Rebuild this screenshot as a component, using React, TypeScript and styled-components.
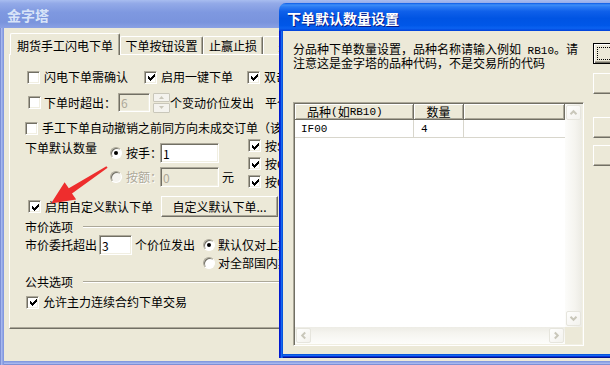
import React from "react";
import styled, { createGlobalStyle } from "styled-components";

const FONT = `"Noto Sans CJK SC", "Noto Sans", "DejaVu Sans", sans-serif`;
const MONO = `"Liberation Mono", "DejaVu Sans Mono", monospace`;

const GlobalStyle = createGlobalStyle`
  * { box-sizing: border-box; }
  html, body { margin: 0; padding: 0; }
  body { background: #ECE9D8; font-family: ${FONT}; font-size: 12px; color: #000; overflow: hidden; }
`;

const Desktop = styled.div`
  position: relative;
  width: 610px;
  height: 365px;
  overflow: hidden;
  background: #8A9FE2;
`;

const Window = styled.section<{ $x: number; $y: number; $w: number; $h: number; $z: number }>`
  position: absolute;
  left: ${(p) => p.$x}px;
  top: ${(p) => p.$y}px;
  width: ${(p) => p.$w}px;
  height: ${(p) => p.$h}px;
  z-index: ${(p) => p.$z};
  display: flex;
  flex-direction: column;
`;

const TitleBar = styled.header<{ $active?: boolean }>`
  flex: none;
  height: 28px;
  display: flex;
  align-items: center;
  padding-left: ${(p) => (p.$active ? 8 : 7)}px;
  padding-top: ${(p) => (p.$active ? 2 : 1)}px;
  font-family: ${FONT};
  font-weight: bold;
  font-size: 14px;
  white-space: nowrap;
  color: ${(p) => (p.$active ? "#fff" : "#D8E4F8")};
  text-shadow: ${(p) => (p.$active ? "1px 1px #0A1883" : "none")};
  border-radius: ${(p) => (p.$active ? "7px 7px 0 0" : "0")};
  background: ${(p) =>
    p.$active
      ? "linear-gradient(180deg, #0A5AE6 0%, #3D8EF7 7%, #2A7BF3 14%, #0F60EA 30%, #0054E3 55%, #0057E8 80%, #0B62F0 90%, #0040D8 100%)"
      : "linear-gradient(180deg, #A8BDF0 0%, #93AAE8 12%, #7E98E0 45%, #7A94DD 80%, #8AA1E4 100%)"};
`;

const BackFrame = styled.div`
  flex: 1;
  background: #ECE9D8;
  padding: 5px 0 4px 9px;
  box-shadow: inset 1px 0 #7D90D6, inset 2px 0 #A7B8EE, inset 3px 0 #93A7E6, inset 4px 0 #8399E0,
    inset 0 -1px #7D90D6, inset 0 -2px #A7B8EE, inset 0 -3px #93A7E6, inset 0 -4px #8399E0;
  display: flex;
  flex-direction: column;
`;

const FrontFrame = styled.div`
  flex: 1;
  background: #ECE9D8;
  padding: 0 0 4px 4px;
  box-shadow: inset 1px 0 #0019CF, inset 2px 0 #0831D9, inset 3px 0 #166AEE, inset 4px 0 #0855DD,
    inset 0 -1px #00138C, inset 0 -2px #0831D9, inset 0 -3px #166AEE, inset 0 -4px #0855DD;
  display: flex;
`;

/* ---------- tabs ---------- */
const TabStrip = styled.div`
  flex: none;
  height: 21px;
  display: flex;
  align-items: flex-end;
  padding-left: 1px;
  position: relative;
  z-index: 2;
`;

const Tab = styled.div<{ $active?: boolean; $w: number }>`
  flex: none;
  width: ${(p) => p.$w}px;
  height: ${(p) => (p.$active ? 22 : 18)}px;
  margin-bottom: ${(p) => (p.$active ? -1 : 0)}px;
  padding-top: ${(p) => (p.$active ? 2 : 1)}px;
  display: flex;
  align-items: center;
  justify-content: center;
  background: #ECE9D8;
  border-top: 1px solid #fff;
  border-left: 1px solid #fff;
  border-right: 1px solid #716F64;
  border-radius: 2px 2px 0 0;
  box-shadow: inset -1px 0 #ACA899;
  white-space: nowrap;
  overflow: hidden;
  line-height: 12px;
`;

const TabPanel = styled.div`
  flex: none;
  height: 275px;
  width: 640px;
  position: relative;
  z-index: 1;
  border-top: 1px solid #fff;
  border-left: 1px solid #fff;
  border-bottom: 1px solid #716F64;
  box-shadow: inset 0 -1px #ACA899;
  display: flex;
  flex-direction: column;
`;

/* ---------- form parts ---------- */
const Row = styled.div<{ $mt: number; $h: number; $pl: number; $top?: boolean }>`
  flex: none;
  display: flex;
  align-items: ${(p) => (p.$top ? "flex-start" : "center")};
  height: ${(p) => p.$h}px;
  margin-top: ${(p) => p.$mt}px;
  padding-left: ${(p) => p.$pl}px;
  white-space: nowrap;
`;

const Text = styled.span<{ $w?: number; $ml?: number; $mt?: number; $disabled?: boolean }>`
  flex: none;
  ${(p) => (p.$w ? `width: ${p.$w}px;` : "")}
  margin-left: ${(p) => p.$ml ?? 0}px;
  margin-top: ${(p) => p.$mt ?? 0}px;
  font-size: 12px;
  line-height: 12px;
  white-space: nowrap;
  color: ${(p) => (p.$disabled ? "#ACA899" : "#000")};
  text-shadow: ${(p) => (p.$disabled ? "1px 1px #fff" : "none")};
`;

const Latin = styled.span`
  font-family: ${MONO};
  font-size: 11px;
`;

const CheckItem = styled.label<{ $w?: number }>`
  flex: none;
  display: flex;
  align-items: center;
  gap: 4px;
  ${(p) => (p.$w ? `width: ${p.$w}px;` : "")}
`;

const Box = styled.span`
  flex: none;
  width: 13px;
  height: 13px;
  background: #fff;
  border: 1px solid;
  border-color: #ACA899 #fff #fff #ACA899;
  box-shadow: inset 1px 1px #716F64, inset -1px -1px #F1EFE2;
  display: flex;
  align-items: center;
  justify-content: center;
  padding: 1px 0 0 1px;
`;

function Check({ checked }: { checked?: boolean }) {
  return (
    <Box>
      {checked && (
        <svg width="7" height="7" viewBox="0 0 7 7" shapeRendering="crispEdges">
          <path d="M0 2h1v1h1v1h1V3h1V2h1V1h1V0h1v3h-1v1h-1v1h-1v1h-1v1h-1V6h-1V5H0z" fill="#000" />
        </svg>
      )}
    </Box>
  );
}

const RadioCircle = styled.span<{ $disabled?: boolean }>`
  flex: none;
  width: 12px;
  height: 12px;
  border-radius: 50%;
  background: ${(p) => (p.$disabled ? "#F5F4EF" : "#fff")};
  border: 1px solid;
  border-color: #ACA899 #fff #fff #ACA899;
  box-shadow: inset 1px 1px #716F64;
  display: flex;
  align-items: center;
  justify-content: center;
`;

const Dot = styled.span`
  width: 4px;
  height: 4px;
  border-radius: 50%;
  background: #000;
`;

function Radio({ checked, disabled }: { checked?: boolean; disabled?: boolean }) {
  return <RadioCircle $disabled={disabled}>{checked && <Dot />}</RadioCircle>;
}

const Field = styled.input<{ $w: number; $h: number; $ml?: number }>`
  flex: none;
  width: ${(p) => p.$w}px;
  height: ${(p) => p.$h}px;
  margin: 0 0 0 ${(p) => p.$ml ?? 0}px;
  padding: 0 0 0 2px;
  font-family: ${FONT};
  font-size: 12px;
  color: #000;
  background: #fff;
  border: 1px solid;
  border-color: #ACA899 #fff #fff #ACA899;
  box-shadow: inset 1px 1px #716F64, inset -1px -1px #F1EFE2;
  outline: none;
  &:disabled {
    background: #ECE9D8;
    color: #ACA899;
  }
`;

const Spinner = styled.div`
  flex: none;
  width: 17px;
  height: 20px;
  margin-left: 3px;
  display: flex;
  flex-direction: column;
  gap: 1px;
`;

const SpinButton = styled.div`
  flex: 1;
  background: #F4F3EE;
  border: 1px solid #C9C7BA;
  border-radius: 1px;
  display: flex;
  align-items: center;
  justify-content: center;
`;

const Tri = styled.svg<{ $down?: boolean }>`
  transform: ${(p) => (p.$down ? "rotate(180deg)" : "none")};
`;

const PushButton = styled.button<{ $w: number; $h: number; $ml?: number; $mt?: number; $default?: boolean }>`
  flex: none;
  width: ${(p) => p.$w}px;
  height: ${(p) => p.$h}px;
  margin: ${(p) => p.$mt ?? 0}px 0 0 ${(p) => p.$ml ?? 0}px;
  padding: 0;
  font-family: ${FONT};
  font-size: 12px;
  color: #000;
  background: #ECE9D8;
  white-space: nowrap;
  border: 1px solid;
  border-color: ${(p) => (p.$default ? "#000" : "#fff #716F64 #716F64 #fff")};
  box-shadow: ${(p) =>
    p.$default
      ? "inset 1px 1px #fff, inset -1px -1px #716F64, inset -2px -2px #ACA899"
      : "inset -1px -1px #ACA899"};
  display: flex;
  align-items: center;
  justify-content: center;
  position: relative;
`;

const FocusRect = styled.span`
  position: absolute;
  inset: 3px;
  border: 1px dotted #000;
`;

const GroupRule = styled.span`
  flex: 1;
  height: 2px;
  margin-left: 10px;
  border-top: 1px solid #ACA899;
  border-bottom: 1px solid #fff;
`;

const RadioStack = styled.div`
  flex: none;
  width: 124px;
  margin-top: 4px;
  display: flex;
  flex-direction: column;
  gap: 4px;
`;

const RadioRow = styled.div`
  height: 20px;
  display: flex;
  align-items: center;
`;

const CheckStack = styled.div`
  flex: none;
  margin-left: 14px;
  display: flex;
  flex-direction: column;
  gap: 5px;
`;

/* ---------- front dialog ---------- */
const DialogBody = styled.div`
  flex: 1;
  display: flex;
  padding: 12px 0 0 10px;
`;

const MainCol = styled.div`
  flex: none;
  width: 291px;
  display: flex;
  flex-direction: column;
`;

const Intro = styled.p`
  margin: 0;
  font-size: 12px;
  line-height: 12px;
  white-space: nowrap;
`;

const ListView = styled.div`
  margin-top: 33px;
  width: 291px;
  height: 244px;
  background: #fff;
  border: 1px solid;
  border-color: #ACA899 #fff #fff #ACA899;
  box-shadow: inset 1px 1px #716F64, inset -1px -1px #F1EFE2;
  padding: 1px;
  display: grid;
  grid-template-columns: 1fr 17px;
  grid-template-rows: 1fr 17px;
`;

const ListContent = styled.div`
  overflow: hidden;
  background: #fff;
`;

const ListGrid = styled.div<{ $h: number; $header?: boolean }>`
  display: grid;
  grid-template-columns: 119px 50px 1fr;
  height: ${(p) => p.$h}px;
  ${(p) => (p.$header ? "" : "border-bottom: 1px solid #D8D6CC;")}
`;

const HeaderCell = styled.div<{ $pl?: number; $center?: boolean }>`
  background: #ECE9D8;
  display: flex;
  align-items: center;
  justify-content: ${(p) => (p.$center ? "center" : "flex-start")};
  padding-left: ${(p) => p.$pl ?? 0}px;
  border-right: 1px solid #716F64;
  border-bottom: 1px solid #716F64;
  box-shadow: inset 1px 1px #fff, inset -1px -1px #ACA899;
  font-size: 12px;
  line-height: 12px;
  white-space: nowrap;
`;

const Cell = styled.div<{ $pl?: number; $last?: boolean }>`
  display: flex;
  align-items: center;
  padding-left: ${(p) => p.$pl ?? 0}px;
  border-right: ${(p) => (p.$last ? "none" : "1px solid #D8D6CC")};
  font-size: 12px;
`;

const VScroll = styled.div`
  display: flex;
  flex-direction: column;
  justify-content: space-between;
  padding: 1px;
  background: linear-gradient(90deg, #FCFCFA 0%, #F5F4EF 60%, #ECEBE4 100%);
`;

const HScroll = styled.div`
  display: flex;
  justify-content: space-between;
  padding: 1px;
  background: linear-gradient(180deg, #EDECE5 0%, #F5F4EF 35%, #FDFDFB 100%);
`;

const Corner = styled.div`
  background: #ECE9D8;
`;

const ScrollBtn = styled.div`
  width: 15px;
  height: 15px;
  border-radius: 2px;
  border: 1px solid #E6E5DD;
  background: linear-gradient(135deg, #FEFEFD 0%, #F3F2ED 100%);
  display: flex;
  align-items: center;
  justify-content: center;
`;

const Chev = styled.svg<{ $rot: number }>`
  transform: rotate(${(p) => p.$rot}deg);
`;

function Chevron({ rot }: { rot: number }) {
  return (
    <Chev $rot={rot} width="9" height="9" viewBox="0 0 9 9">
      <path d="M1.5 6.2 L4.5 3.2 L7.5 6.2" fill="none" stroke="#C9C7BA" strokeWidth="2" />
    </Chev>
  );
}

const ButtonCol = styled.div`
  flex: none;
  margin-left: 9px;
  display: flex;
  flex-direction: column;
`;

const ArrowLayer = styled.svg`
  position: absolute;
  left: 0;
  top: 0;
  z-index: 2;
  pointer-events: none;
`;

export default function App() {
  return (
    <>
      <GlobalStyle />
      <Desktop>
        <Window $x={0} $y={0} $w={660} $h={365} $z={1}>
          <TitleBar>金字塔</TitleBar>
          <BackFrame>
            <TabStrip>
              <Tab $active $w={110}>期货手工闪电下单</Tab>
              <Tab $w={83}>下单按钮设置</Tab>
              <Tab $w={60}>止赢止损</Tab>
              <Tab $w={90}>多账户设置</Tab>
            </TabStrip>
            <TabPanel>
              <Row $mt={15} $h={14} $pl={17}>
                <CheckItem $w={117}>
                  <Check />
                  <Text>闪电下单需确认</Text>
                </CheckItem>
                <CheckItem $w={103}>
                  <Check checked />
                  <Text>启用一键下单</Text>
                </CheckItem>
                <CheckItem>
                  <Check checked />
                  <Text>双击盘口价格下单</Text>
                </CheckItem>
              </Row>
              <Row $mt={8} $h={21} $pl={18}>
                <Check />
                <Text $w={74} $ml={3}>下单时超出：</Text>
                <Field $w={32} $h={19} disabled readOnly value="6" />
                <Spinner>
                  <SpinButton>
                    <Tri width="5" height="3" viewBox="0 0 5 3">
                      <path d="M0 3 L2.5 0 L5 3 Z" fill="#C9C7BA" />
                    </Tri>
                  </SpinButton>
                  <SpinButton>
                    <Tri $down width="5" height="3" viewBox="0 0 5 3">
                      <path d="M0 3 L2.5 0 L5 3 Z" fill="#C9C7BA" />
                    </Tri>
                  </SpinButton>
                </Spinner>
                <Text $w={95}>个变动价位发出</Text>
                <Text>平仓单按对价发出</Text>
              </Row>
              <Row $mt={8} $h={14} $pl={15}>
                <CheckItem>
                  <Check />
                  <Text>手工下单自动撤销之前同方向未成交订单（该功能仅对闪电下单有效）</Text>
                </CheckItem>
              </Row>
              <Row $mt={4} $h={48} $pl={15} $top>
                <Text $w={85} $mt={3}>下单默认数量</Text>
                <RadioStack>
                  <RadioRow>
                    <Radio checked />
                    <Text $w={34} $ml={4}>按手：</Text>
                    <Field $w={59} $h={20} readOnly value="1" />
                  </RadioRow>
                  <RadioRow>
                    <Radio disabled />
                    <Text $w={34} $ml={4} $disabled>按额：</Text>
                    <Field $w={59} $h={20} disabled readOnly value="0" />
                    <Text $ml={3}>元</Text>
                  </RadioRow>
                </RadioStack>
                <CheckStack>
                  <CheckItem>
                    <Check checked />
                    <Text>按Shift键下单时反手</Text>
                  </CheckItem>
                  <CheckItem>
                    <Check checked />
                    <Text>按Ctrl键下单时平仓</Text>
                  </CheckItem>
                  <CheckItem>
                    <Check checked />
                    <Text>按Ctrl键撤单</Text>
                  </CheckItem>
                </CheckStack>
              </Row>
              <Row $mt={9} $h={21} $pl={18}>
                <CheckItem>
                  <Check checked />
                  <Text>启用自定义默认下单</Text>
                </CheckItem>
                <PushButton $w={117} $h={21} $ml={8}>自定义默认下单...</PushButton>
              </Row>
              <Row $mt={4} $h={12} $pl={15}>
                <Text>市价选项</Text>
                <GroupRule />
              </Row>
              <Row $mt={2} $h={20} $pl={15}>
                <Text $w={74}>市价委托超出</Text>
                <Field $w={33} $h={20} readOnly value="3" />
                <Text $w={68} $ml={3}>个价位发出</Text>
                <Radio checked />
                <Text $ml={3}>默认仅对上期所品种有效</Text>
              </Row>
              <Row $mt={2} $h={12} $pl={193}>
                <Radio />
                <Text $ml={3}>对全部国内期货品种有效</Text>
              </Row>
              <Row $mt={7} $h={12} $pl={15}>
                <Text>公共选项</Text>
                <GroupRule />
              </Row>
              <Row $mt={8} $h={12} $pl={16}>
                <CheckItem>
                  <Check checked />
                  <Text>允许主力连续合约下单交易</Text>
                </CheckItem>
              </Row>
            </TabPanel>
          </BackFrame>
        </Window>

        <ArrowLayer width="610" height="365" viewBox="0 0 610 365">
          <polygon
            points="107.6,167.8 72,193.6 76.2,199.6 51,203.5 64.6,182.3 68.8,188.2 106.4,166.2"
            fill="#EE2D2D"
          />
        </ArrowLayer>

        <Window $x={279} $y={3} $w={360} $h={355} $z={3}>
          <TitleBar $active>下单默认数量设置</TitleBar>
          <FrontFrame>
            <DialogBody>
              <MainCol>
                <Intro>
                  分品种下单数量设置，品种名称请输入例如<Latin> RB10</Latin>。请
                  <br />
                  注意这是金字塔的品种代码，不是交易所的代码
                </Intro>
                <ListView>
                  <ListContent>
                    <ListGrid $h={16} $header>
                      <HeaderCell $pl={12}>
                        品种<Latin>(</Latin>如<Latin>RB10)</Latin>
                      </HeaderCell>
                      <HeaderCell $center>数量</HeaderCell>
                      <HeaderCell />
                    </ListGrid>
                    <ListGrid $h={18}>
                      <Cell $pl={6}>
                        <Latin>IF00</Latin>
                      </Cell>
                      <Cell $pl={7}>
                        <Latin>4</Latin>
                      </Cell>
                      <Cell $last />
                    </ListGrid>
                  </ListContent>
                  <VScroll>
                    <ScrollBtn>
                      <Chevron rot={0} />
                    </ScrollBtn>
                    <ScrollBtn>
                      <Chevron rot={180} />
                    </ScrollBtn>
                  </VScroll>
                  <HScroll>
                    <ScrollBtn>
                      <Chevron rot={270} />
                    </ScrollBtn>
                    <ScrollBtn>
                      <Chevron rot={90} />
                    </ScrollBtn>
                  </HScroll>
                  <Corner />
                </ListView>
              </MainCol>
              <ButtonCol>
                <PushButton $w={75} $h={21} $default>
                  确定
                  <FocusRect />
                </PushButton>
                <PushButton $w={75} $h={21} $mt={9}>取消</PushButton>
                <PushButton $w={75} $h={21} $mt={23}>添加</PushButton>
                <PushButton $w={75} $h={21} $mt={7}>删除</PushButton>
              </ButtonCol>
            </DialogBody>
          </FrontFrame>
        </Window>
      </Desktop>
    </>
  );
}
